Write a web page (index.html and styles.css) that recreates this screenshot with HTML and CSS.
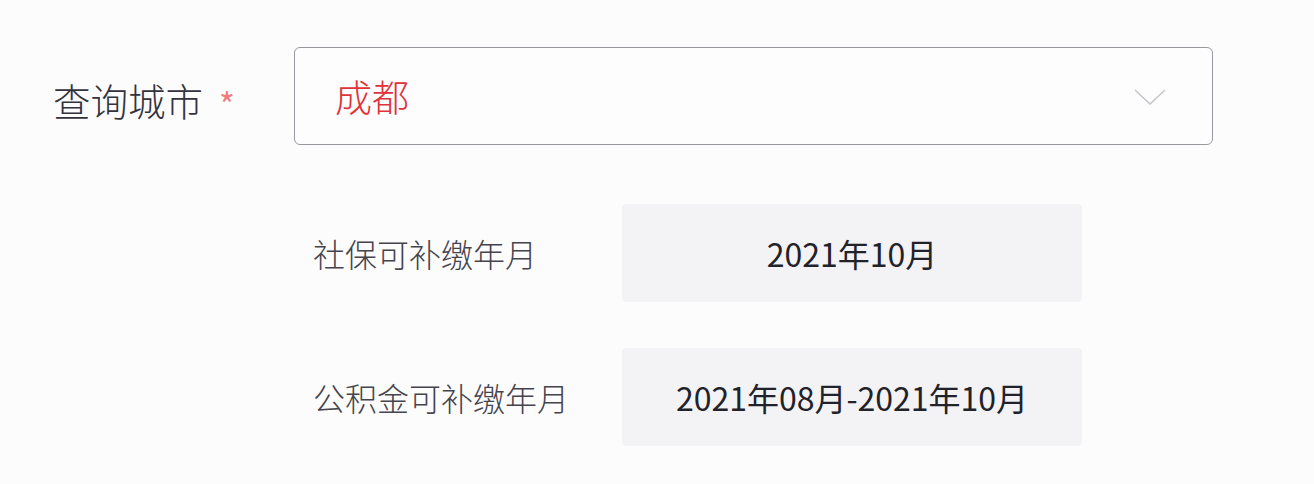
FILE: index.html
```html
<!DOCTYPE html>
<html lang="zh-CN">
<head>
<meta charset="utf-8">
<link rel="stylesheet" href="styles.css">
</head>
<body>
<div class="page">
  <div class="city-row">
    <div class="city-label">查询城市<span class="req">*</span></div>
    <div class="select">
      <span class="select-value">成都</span>
      <svg class="chevron" width="32" height="18" viewBox="0 0 32 18"><path d="M1 2 L16 16 L31 2" fill="none" stroke="#c4c4c8" stroke-width="1.4"/></svg>
    </div>
  </div>
  <div class="info">
    <div class="info-label">社保可补缴年月</div>
    <div class="info-value">2021年10月</div>
    <div class="info-label">公积金可补缴年月</div>
    <div class="info-value">2021年08月-2021年10月</div>
  </div>
</div>
</body>
</html>
```
FILE: styles.css
```css
html, body {
  margin: 0;
  padding: 0;
  background: #fcfcfd;
}
.page {
  width: 1314px;
  height: 484px;
  font-family: "Noto Sans CJK SC", "Noto Sans", sans-serif;
  font-weight: 300;
  padding-top: 47px;
  box-sizing: border-box;
}
.city-row {
  display: grid;
  grid-template-columns: 294px 919px;
  align-items: center;
}
.city-label {
  padding-left: 53px;
  font-size: 37.5px;
  color: #34333d;
  display: flex;
  align-items: center;
  padding-top: 6px;
}
.req {
  color: #f27c7c;
  font-size: 34px;
  font-weight: 400;
  margin-left: 16px;
  margin-top: 8px;
}
.select {
  height: 98px;
  box-sizing: border-box;
  border: 1.5px solid #98979e;
  border-radius: 6px;
  background: #fdfdfe;
  display: flex;
  align-items: center;
  justify-content: space-between;
  padding: 0 46px 0 40px;
}
.select-value {
  color: #e0323a;
  font-size: 37px;
}
.chevron {
  margin-top: 2px;
}
.info {
  margin-top: 59px;
  padding-left: 313px;
  display: grid;
  grid-template-columns: 309px 460px;
  row-gap: 46px;
  align-items: center;
}
.info-label {
  font-size: 32px;
  color: #45444d;
}
.info-value {
  height: 98px;
  background: #f3f3f5;
  border-radius: 4px;
  display: flex;
  align-items: center;
  justify-content: center;
  font-size: 32px;
  font-weight: 400;
  color: #22222a;
}
```
